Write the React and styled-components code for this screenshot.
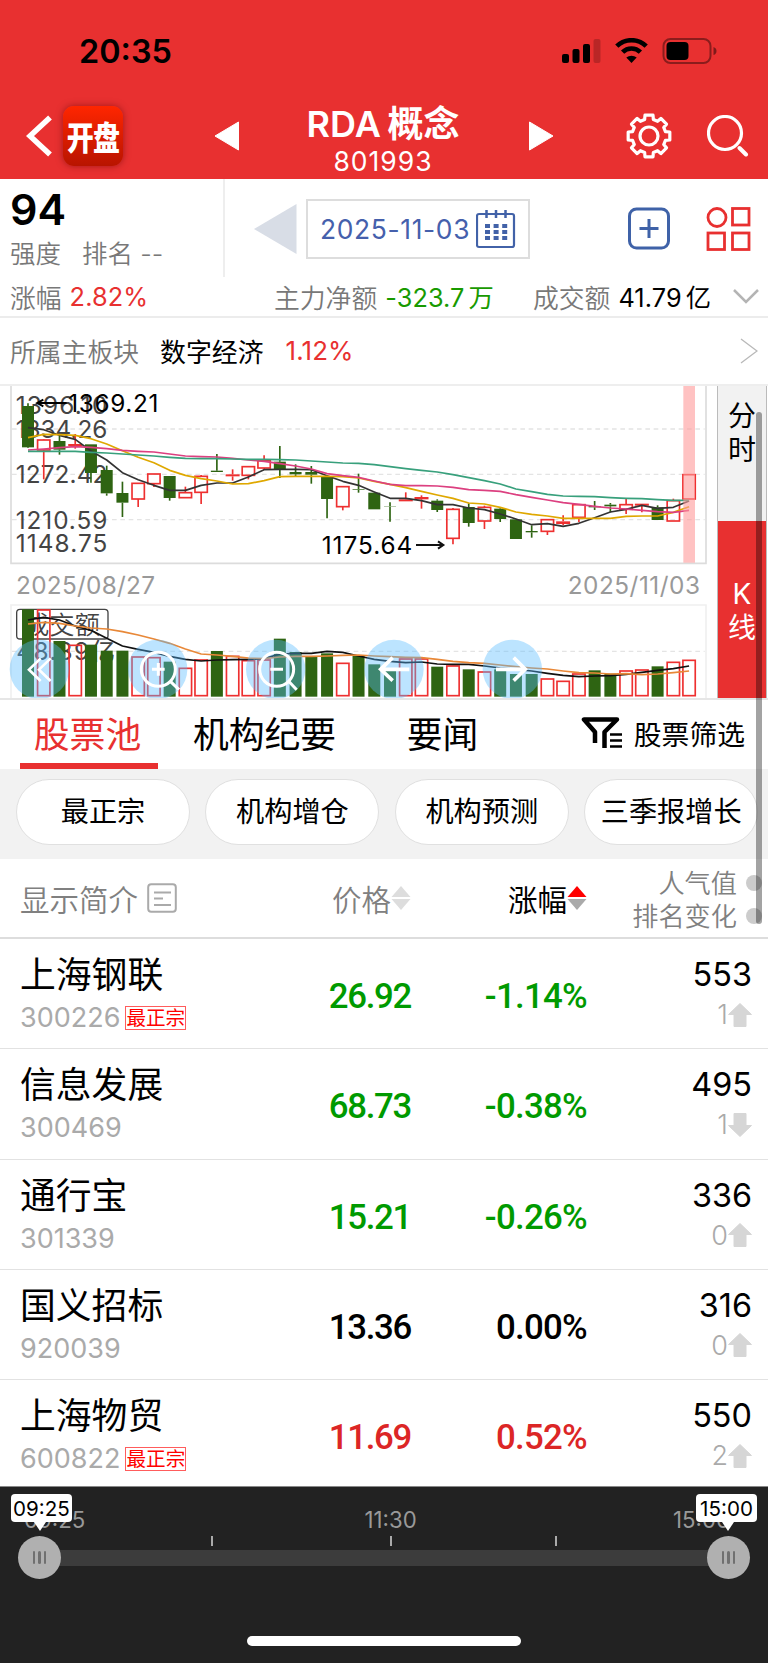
import React from "react";
import styled, { createGlobalStyle } from "styled-components";

const Global = createGlobalStyle`
  * { box-sizing: border-box; }
  body { margin: 0; background: #fff; }
`;

const RED = "#e83030";
const GREEN = "#009a00";

const Screen = styled.div`
  position: relative;
  width: 768px;
  height: 1663px;
  overflow: hidden;
  display: flex;
  flex-direction: column;
  background: #fff;
  color: #000;
  font-family: "Inter", "Noto Sans CJK SC", sans-serif;
  white-space: nowrap;
`;

const Header = styled.header`
  height: 179px;
  flex: none;
  background: ${RED};
  color: #fff;
`;

const StatusBar = styled.div`
  height: 100px;
  display: flex;
  align-items: center;
  justify-content: space-between;
  padding: 3px 50px 0 79px;
  color: #000;
`;

const Clock = styled.div`
  font-size: 32.4px;
  font-weight: 600;
  letter-spacing: 0;
`;

const NavBar = styled.div`
  display: grid;
  grid-template-columns: 36px 60px 185px 152px 167px 81px 42px;
  grid-template-rows: 72px;
  height: 72px;
  align-items: center;
  padding-left: 26px;
`;

const NavArrow = styled.svg`
  width: 26px;
  height: 30px;
  margin-left: ${(p) => p.$inset}px;
`;

const AppLogo = styled.div`
  width: 60px;
  height: 60px;
  margin-left: 1px;
  border-radius: 11px;
  background: linear-gradient(#ff2600, #b81400);
  box-shadow: 0 0 7px rgba(90, 0, 0, 0.5);
  display: flex;
  align-items: center;
  justify-content: center;
  font-size: 27px;
  font-weight: 900;
  letter-spacing: -0.8px;
`;

const LogoText = styled.span`
  transform: scaleY(1.2);
`;

const TitleBlock = styled.div`
  display: flex;
  flex-direction: column;
  align-items: center;
  padding-top: 10px;
`;

const Title = styled.div`
  font-size: 36px;
  line-height: 41px;
  font-weight: 600;
  word-spacing: -2.5px;
`;

const SubTitle = styled.div`
  font-size: 26.5px;
  line-height: 33px;
  letter-spacing: 1px;
`;

const Summary = styled.section`
  height: 98px;
  flex: none;
  display: flex;
`;

const Strength = styled.div`
  width: 225px;
  border-right: 2px solid #eee;
  padding: 4px 0 0 10px;
`;

const Score = styled.div`
  font-size: 43px;
  line-height: 52px;
  font-weight: 600;
`;

const Caption = styled.div`
  display: flex;
  gap: ${(p) => p.$gap || 0}px;
  font-size: 25.5px;
  line-height: 38px;
  color: #787878;
  font-weight: 350;
`;

const DatePanel = styled.div`
  flex: 1;
  display: flex;
  align-items: center;
  padding: 1px 0 0 29px;
`;

const DateBox = styled.div`
  width: 224px;
  height: 60px;
  margin: 0 98px 0 9px;
  border: 2px solid #ddd;
  display: flex;
  align-items: center;
  justify-content: space-between;
  padding: 0 12px 0 12px;
  font-size: 26.4px;
  letter-spacing: 0.65px;
  color: #4560ac;
`;

const StatsRow = styled.div`
  height: 41px;
  flex: none;
  display: grid;
  grid-template-columns: 264px 259px 200px 1fr;
  align-items: center;
  padding: 0 0 1px 10px;
  border-bottom: 2px solid #ececec;
`;

const Stat = styled.div`
  display: flex;
  align-items: center;
  gap: 8px;
  font-size: 25.3px;
`;

const Label = styled.span`
  color: #787878;
  font-weight: 350;
  font-size: 25.8px;
`;

const Value = styled.span`
  color: ${(p) => p.$color || "#000"};
  letter-spacing: 0.1px;
`;

const Unit = styled.span`
  margin-left: 4px;
`;

const SectorRow = styled.div`
  height: 68px;
  flex: none;
  display: flex;
  align-items: center;
  padding: 0 10px 2px 10px;
  font-size: 25.9px;
  border-bottom: 2px solid #eee;
`;

const SectorName = styled.span`
  margin: 0 22px 0 21px;
`;

const MoreIcon = styled.svg`
  width: 18px;
  height: 26px;
  margin: 2px 0 0 auto;
`;

const ChartArea = styled.section`
  height: 314px;
  flex: none;
  display: flex;
  border-bottom: 2px solid #e6e6e6;
`;

const ModeTabs = styled.div`
  width: 50px;
  margin-left: 1px;
  display: flex;
  flex-direction: column;
  border-left: 1px solid #bbb;
  border-right: 1px solid #bbb;
`;

const ModeTab = styled.div`
  height: ${(p) => p.$height}px;
  display: flex;
  flex-direction: column;
  align-items: center;
  padding-top: ${(p) => p.$top}px;
  background: ${(p) => (p.$active ? RED : "#f2f2f2")};
  color: ${(p) => (p.$active ? "#fff" : "#000")};
  font-size: 28px;
  line-height: 34px;
`;

const TabBar = styled.nav`
  height: 69px;
  flex: none;
  display: flex;
  padding: 0 23px 0 20px;
`;

const Tab = styled.div`
  width: ${(p) => p.$width}px;
  margin-right: ${(p) => p.$after}px;
  text-indent: ${(p) => (p.$active ? -3 : -1)}px;
  text-align: center;
  font-size: 35.8px;
  line-height: 70px;
  height: 69px;
  color: ${(p) => (p.$active ? RED : "#000")};
  border-bottom: 6px solid ${(p) => (p.$active ? RED : "transparent")};
`;

const FilterButton = styled.div`
  margin-left: auto;
  height: 66px;
  display: flex;
  align-items: center;
  gap: 11px;
  font-size: 27.8px;
`;

const Chips = styled.div`
  height: 90px;
  flex: none;
  background: #f2f2f2;
  display: flex;
  gap: 15.4px;
  padding: 10px 0 0 16px;
`;

const Chip = styled.div`
  width: 174px;
  height: 66px;
  flex: none;
  border: 1.5px solid #e0e0e0;
  border-radius: 33px;
  background: #fff;
  display: flex;
  align-items: center;
  justify-content: center;
  padding-bottom: 6px;
  font-size: 28.2px;
`;

const columns = "290px 101px 176px 165px";

const TableHead = styled.div`
  height: 80px;
  flex: none;
  display: grid;
  grid-template-columns: ${columns};
  align-items: center;
  padding: 0 16px 0 20px;
  border-bottom: 2px solid #ddd;
  color: #808080;
  font-size: 29.5px;
`;

const HeadCell = styled.div`
  display: flex;
  align-items: center;
  justify-content: ${(p) => (p.$end ? "flex-end" : "flex-start")};
  gap: ${(p) => p.$gap || 0}px;
  color: ${(p) => (p.$on ? "#000" : "inherit")};
  font-weight: ${(p) => (p.$on ? 400 : 350)};
`;

const RankHead = styled.div`
  display: flex;
  flex-direction: column;
  align-items: flex-end;
  padding-top: 3px;
  font-size: 26.2px;
  font-weight: 350;
  line-height: 33px;
`;

const RankLine = styled.div`
  display: flex;
  align-items: center;
  gap: 9px;
  margin-right: -10px;
`;

const Dot = styled.i`
  width: 16px;
  height: 16px;
  border-radius: 50%;
  background: #ccc;
`;

const StockRow = styled.div`
  height: 110.3px;
  flex: none;
  display: grid;
  grid-template-columns: ${columns};
  padding: 0 16px 0 20px;
  border-bottom: 1px solid #e2e2e2;
`;

const StockName = styled.div`
  font-size: 35.8px;
  line-height: 44px;
  padding-top: 14px;
`;

const CodeLine = styled.div`
  display: flex;
  align-items: center;
  gap: 5px;
  height: 41px;
  font-size: 27px;
  color: #aaa;
`;

const Tag = styled.span`
  height: 24px;
  border: 1px solid #ff5c5c;
  color: #f00;
  font-size: 19.6px;
  line-height: 22px;
`;

const Quote = styled.div`
  padding-top: 1px;
  line-height: 113px;
  font-family: Roboto, sans-serif;
  font-size: 34.8px;
  font-weight: 500;
  letter-spacing: ${(p) => p.$track}px;
  text-align: right;
  color: ${(p) => p.$color};
`;

const Rank = styled.div`
  display: flex;
  flex-direction: column;
  align-items: flex-end;
  padding-top: 15px;
`;

const RankValue = styled.div`
  font-size: 32.4px;
  line-height: 42px;
`;

const RankMove = styled.div`
  display: flex;
  align-items: center;
  height: 37px;
  font-size: 27px;
  color: #aaa;
  font-weight: 300;
`;

const Timeline = styled.footer`
  position: absolute;
  left: 0;
  right: 0;
  top: 1486px;
  height: 177px;
  background: #222;
  border-top: 1px solid #888;
`;

const TimeLabels = styled.div`
  display: flex;
  padding: 19px 38px 0 24px;
  height: 49px;
  font-size: 22.2px;
  line-height: 27px;
  color: #999;
`;

const MidLabel = styled.span`
  flex: 1;
  padding-left: 23px;
  text-align: center;
`;

const Ticks = styled.div`
  display: flex;
  height: 14px;
  padding-left: 211px;
`;

const Tick = styled.i`
  width: 2px;
  height: 10px;
  margin-right: ${(p) => p.$after}px;
  background: #aaa;
`;

const Track = styled.div`
  height: 16px;
  margin: 0 39px;
  background: #3c3c3c;
`;

const Handle = styled.div`
  position: absolute;
  top: 49px;
  left: ${(p) => p.$x}px;
  width: 43px;
  height: 43px;
  border-radius: 50%;
  background: #b0b0b0;
  display: flex;
  align-items: center;
  justify-content: center;
  gap: 3px;
`;

const Grip = styled.i`
  width: 2.5px;
  height: 13px;
  border-radius: 2px;
  background: #707070;
`;

const Bubble = styled.div`
  position: absolute;
  top: 7px;
  left: ${(p) => p.$x}px;
  width: 61px;
  height: 28px;
  border-radius: 4px;
  background: #fff;
  color: #000;
  text-align: center;
  font-size: 20.6px;
  line-height: 29px;
  &::after {
    content: "";
    position: absolute;
    top: 28px;
    left: ${(p) => p.$tip}px;
    border: 6px solid transparent;
    border-top: 9px solid #fff;
    border-bottom: 0;
  }
`;

const HomeBar = styled.div`
  width: 274px;
  height: 10px;
  margin: 70px auto 0;
  border-radius: 5px;
  background: #fff;
`;

const ScrollThumb = styled.div`
  position: absolute;
  left: 756px;
  top: 412px;
  width: 6px;
  height: 512px;
  border-radius: 3px;
  background: rgba(0, 0, 0, 0.36);
`;

const PITCH = 47.22;
const cx = (i) => 84 + PITCH * i;

// Each entry: direction, body top, body bottom, high, low, volume top.
const candles = [
  ["g", 78, 202, 70, 204, 688], ["r", 180, 210, 178, 298, 688], ["g", 183, 209, 166, 224, 783],
  ["r", 192, 198, 162, 206, 794], ["g", 193, 279, 193, 308, 794], ["g", 270, 340, 257, 347, 812],
  ["g", 339, 368, 305, 411, 812], ["r", 310, 357, 310, 381, 829], ["r", 282, 311, 282, 321, 831],
  ["g", 288, 354, 288, 362, 845], ["r", 338, 353, 320, 353, 863], ["r", 289, 337, 285, 372, 838],
  ["g", 272, 276, 222, 276, 813], ["r", 283, 289, 268, 302, 827], ["r", 260, 286, 260, 298, 840],
  ["r", 242, 264, 226, 270, 838], ["g", 245, 270, 198, 294, 776], ["g", 276, 283, 253, 288, 816],
  ["g", 276, 284, 258, 311, 830], ["g", 290, 357, 290, 415, 820], ["r", 320, 380, 318, 391, 848],
  ["g", 327, 329, 281, 338, 828], ["g", 338, 388, 338, 388, 853], ["g", 379, 380, 367, 425, 872],
  ["r", 358, 364, 337, 364, 835], ["r", 351, 358, 346, 386, 835], ["g", 362, 390, 358, 396, 860],
  ["r", 388, 475, 384, 493, 856], ["g", 381, 429, 370, 440, 868], ["r", 382, 423, 377, 447, 874],
  ["g", 386, 417, 383, 426, 868], ["g", 418, 477, 418, 477, 882], ["g", 453, 457, 436, 473, 882],
  ["r", 419, 454, 419, 465, 895], ["r", 424, 432, 406, 436, 902], ["r", 374, 412, 372, 427, 880],
  ["g", 378, 382, 363, 390, 871], ["g", 374, 379, 369, 397, 881], ["r", 374, 388, 357, 402, 871],
  ["r", 371, 377, 371, 397, 868], ["g", 382, 420, 376, 420, 859], ["r", 362, 423, 356, 423, 845],
  ["r", 284, 357, 284, 357, 839],
];

const priceLines = [
  ["#333", [143, 149, 166, 178, 213, 240, 278, 299, 316, 331, 331, 316, 309, 309, 291, 269, 268, 268, 269, 287, 304, 316, 336, 355, 355, 362, 374, 374, 384, 389, 402, 417, 434, 431, 439, 430, 413, 396, 388, 376, 385, 382, 363]],
  ["#dfa800", [173, 163, 164, 166, 176, 192, 212, 232, 248, 271, 286, 296, 303, 312, 311, 302, 290, 289, 289, 289, 290, 294, 304, 313, 323, 334, 345, 355, 369, 372, 382, 396, 403, 408, 415, 415, 415, 415, 409, 408, 408, 397, 380]],
  ["#dc4080", [210, 207, 203, 200, 202, 206, 211, 214, 216, 222, 228, 230, 231, 235, 240, 244, 251, 258, 267, 281, 287, 292, 303, 313, 317, 317, 318, 322, 329, 331, 334, 344, 352, 360, 368, 373, 379, 384, 387, 391, 395, 397, 391]],
  ["#38a07c", [214, 214, 214, 214, 217, 219, 222, 225, 228, 232, 235, 236, 236, 237, 238, 238, 239, 240, 243, 246, 249, 250, 254, 260, 266, 271, 276, 284, 293, 302, 312, 327, 335, 343, 348, 349, 350, 353, 355, 356, 359, 361, 361]],
];

const volumeLines = [
  ["#111", [720, 712, 720, 738, 751, 775, 798, 808, 817, 829, 838, 843, 840, 839, 838, 836, 822, 820, 820, 814, 817, 828, 838, 844, 848, 846, 852, 853, 853, 858, 864, 868, 873, 880, 886, 890, 888, 887, 883, 877, 871, 866, 858]],
  ["#e88838", [732, 727, 730, 738, 744, 747, 755, 765, 777, 790, 807, 822, 825, 829, 834, 836, 831, 829, 829, 828, 826, 825, 828, 830, 832, 833, 838, 844, 848, 850, 855, 860, 864, 867, 873, 878, 879, 882, 881, 884, 882, 878, 873]],
];

const axis = [["1396.10", 100], ["1334.26", 172], ["1272.42", 307], ["1210.59", 445], ["1148.75", 516]];
const UP = "#ee3030";
const DOWN = "#2e6412";

const Polyline = ({ color, ys }) => (
  <polyline fill="none" stroke={color} strokeWidth="5" strokeLinejoin="round"
    points={ys.map((y, i) => `${cx(i)},${y}`).join(" ")} />
);

const Candle = ({ i, d: [dir, top, bottom, high, low, vol] }) => {
  const x = cx(i);
  const color = dir === "r" ? UP : DOWN;
  const hollow = dir === "r" && bottom - top > 9;
  return (
    <g>
      {high < top && <path d={`M${x} ${high}V${top}`} stroke={color} strokeWidth="5" />}
      {low > bottom && <path d={`M${x} ${bottom}V${low}`} stroke={color} strokeWidth="5" />}
      {hollow
        ? <rect x={x - 18.5} y={top} width="37" height={bottom - top} fill="none" stroke={UP} strokeWidth="5" />
        : <rect x={dir === "r" ? x - 21 : x - 18} y={top} width={dir === "r" ? 42 : 36} height={bottom - top} fill={color} />}
      {dir === "r"
        ? <rect x={x - 18.5} y={vol + 2} width="37" height={945 - vol} fill="none" stroke={UP} strokeWidth="5" />
        : <rect x={x - 18} y={vol} width="36" height={950 - vol} fill={DOWN} />}
    </g>
  );
};

const KChart = () => (
  <svg width="716" height="312" viewBox="0 18 2148 936" fontFamily="Inter, 'Noto Sans CJK SC', sans-serif" fontSize="73">
    <path d="M33 18V550H2118V18" fill="none" stroke="#dcdcdc" strokeWidth="5" />
    <path d="M33 954V675H2118V954" fill="none" stroke="#f0f0f0" strokeWidth="5" />
    <path d="M36 147H2114M36 283H2114M36 419H2114M36 814H2114" stroke="#e4e4e4" strokeWidth="4" strokeDasharray="14 11" />
    {axis.map(([t, y]) => (
      <text key={t} x="47" y={y + 1} fill="#444" textLength="275">{t}</text>
    ))}
    <rect x="50" y="688" width="274" height="89" rx="10" fill="none" stroke="#444" strokeWidth="4" />
    <text x="72" y="761" fill="#444" textLength="228" fontWeight="350" fontSize="76">成交额</text>
    <text x="49" y="840" fill="#444" textLength="296">48.89亿</text>
    <text x="48" y="641" fill="#999" textLength="417">2025/08/27</text>
    <text x="1703" y="641" fill="#999" textLength="397">2025/11/03</text>
    {candles.map((d, i) => <Candle key={i} i={i} d={d} />)}
    {[...priceLines, ...volumeLines].map(([c, ys]) => <Polyline key={c} color={c} ys={ys} />)}
    <text x="205" y="97" fill="#000" textLength="270">1369.21</text>
    <path d="M200 69H112M130 59L112 69L130 79" fill="none" stroke="#000" strokeWidth="6" />
    <text x="965" y="521" fill="#000" textLength="272">1175.64</text>
    <path d="M1248 495H1330M1314 484L1330 495L1314 506" fill="none" stroke="#111" strokeWidth="6" />
    <rect x="2050" y="18" width="35" height="530" fill="#ff9a9a" fillOpacity="0.6" />
    {[118, 473, 827, 1182, 1537].map((x) => (
      <circle key={x} cx={x} cy="868" r="89" fill="#58bbff" fillOpacity="0.4" />
    ))}
    <g fill="none" stroke="#fff" strokeWidth="9">
      <path d="M122 835L87 869L122 903M152 835L117 869L152 903" strokeWidth="8" />
      <circle cx="475" cy="868" r="51" />
      <path d="M511 904L537 929M475 849V887M456 868H494" />
      <circle cx="830" cy="868" r="51" />
      <path d="M866 904L890 929M811 868H849" />
      <path d="M1228 868H1142M1178 833L1142 868L1178 902" strokeWidth="11" />
      <path d="M1488 868H1576M1541 833L1576 868L1541 902" strokeWidth="11" />
    </g>
  </svg>
);

const Sorter = ({ up, down }) => (
  <svg width="20" height="26" viewBox="0 0 20 26">
    <path d="M0.500 12L10 1L19.500 12Z" fill={up} />
    <path d="M0.500 14H19.500L10 25Z" fill={down} />
  </svg>
);

const MoveArrow = ({ down }) => (
  <svg width="24" height="24" viewBox="0 0 24 24">
    <path d="M12 0.500L23.500 11.500H18V23.500H6V11.500H0.500Z" fill="#d6d6d6" stroke="#d6d6d6" strokeLinejoin="round"
      transform={down ? "rotate(180 12 12)" : undefined} />
  </svg>
);

const gearPath = (() => {
  const pts = [];
  for (let k = 0; k < 8; k++) {
    const a = (k * Math.PI) / 4 - Math.PI / 2;
    [[-0.26, 17], [-0.19, 21.2], [0.19, 21.2], [0.26, 17]].forEach(([o, r]) =>
      pts.push(`${(23 + r * Math.cos(a + o)).toFixed(2)} ${(23 + r * Math.sin(a + o)).toFixed(2)}`)
    );
  }
  return `M${pts.join("L")}Z`;
})();

const StatusIcons = () => (
  <svg width="156" height="28" viewBox="0 0 156 28">
    <rect x="0" y="16" width="7" height="9" rx="2" />
    <rect x="10.5" y="11" width="7" height="14" rx="2" />
    <rect x="21" y="6" width="7" height="19" rx="2" />
    <rect x="31.5" y="1" width="7" height="24" rx="2" opacity="0.2" />
    <g fill="none" stroke="#000" strokeWidth="4.6">
      <path d="M54.8 8.2A21 21 0 0 1 84.2 8.2" />
      <path d="M60.6 14.2A12.6 12.6 0 0 1 78.4 14.2" />
    </g>
    <path d="M64.3 19.6A8 8 0 0 1 74.7 19.6L69.5 25Z" />
    <rect x="101.5" y="1" width="47" height="24" rx="7" fill="none" stroke="#000" strokeOpacity="0.4" strokeWidth="2" />
    <rect x="104.5" y="4" width="22" height="18" rx="4" />
    <path d="M151.5 9Q154.500 10 154.500 13Q154.500 16 151.500 17Z" opacity="0.45" />
  </svg>
);

const stocks = [
  { name: "上海钢联", code: "300226", tag: true, price: "26.92", pct: "-1.14%", color: GREEN, rank: 553, move: 1 },
  { name: "信息发展", code: "300469", price: "68.73", pct: "-0.38%", color: GREEN, rank: 495, move: 1, down: true },
  { name: "通行宝", code: "301339", price: "15.21", pct: "-0.26%", color: GREEN, rank: 336, move: 0 },
  { name: "国义招标", code: "920039", price: "13.36", pct: "0.00%", color: "#000", rank: 316, move: 0 },
  { name: "上海物贸", code: "600822", tag: true, price: "11.69", pct: "0.52%", color: "#dc2626", rank: 550, move: 2 },
];

export default function App() {
  return (
    <Screen>
      <Global />
      <Header>
        <StatusBar>
          <Clock>20:35</Clock>
          <StatusIcons />
        </StatusBar>
        <NavBar>
          <svg width="27" height="42" viewBox="0 0 27 42">
            <path d="M24 2.500L4 21L24 39.500" fill="none" stroke="#fff" strokeWidth="5.500" />
          </svg>
          <AppLogo><LogoText>开盘</LogoText></AppLogo>
          <NavArrow $inset={92} viewBox="0 0 26 30">
            <path d="M24.500 1V29L1 15Z" fill="#fff" stroke="#fff" strokeLinejoin="round" />
          </NavArrow>
          <TitleBlock>
            <Title>RDA 概念</Title>
            <SubTitle>801993</SubTitle>
          </TitleBlock>
          <NavArrow $inset={69} viewBox="0 0 26 30">
            <path d="M1.500 1V29L25 15Z" fill="#fff" stroke="#fff" strokeLinejoin="round" />
          </NavArrow>
          <svg width="46" height="46" viewBox="0 0 46 46">
            <path d={gearPath} fill="none" stroke="#fff" strokeWidth="3.200" strokeLinejoin="round" />
            <circle cx="23" cy="23" r="9" fill="none" stroke="#fff" strokeWidth="3.200" />
          </svg>
          <svg width="42" height="42" viewBox="0 0 42 42">
            <circle cx="18" cy="18" r="16.500" fill="none" stroke="#fff" strokeWidth="3.200" />
            <path d="M32.500 33L39 39.500" stroke="#fff" strokeWidth="4" strokeLinecap="round" />
          </svg>
        </NavBar>
      </Header>

      <Summary>
        <Strength>
          <Score>94</Score>
          <Caption $gap={21}>
            <span>强度</span>
            <span>排名 --</span>
          </Caption>
        </Strength>
        <DatePanel>
          <svg width="43" height="50" viewBox="0 0 43 50">
            <path d="M42.500 0V50L0 25Z" fill="#d8dde6" />
          </svg>
          <DateBox>
            2025-11-03
            <svg width="40" height="40" viewBox="0 0 40 40" fill="none" stroke="#4262a8" strokeWidth="2.200">
              <rect x="1" y="5" width="37" height="33" rx="2" />
              <path d="M10.500 1V9M20 1V9M29.500 1V9" strokeWidth="2.500" />
              <path d="M9 17H31.500M9 23H31.500M9 29H31.500" strokeWidth="4" strokeDasharray="5 3.600" />
            </svg>
          </DateBox>
          <svg width="124" height="44" viewBox="0 0 124 44" fill="none">
            <rect x="1.500" y="2" width="39" height="39" rx="7" stroke="#3f62a8" strokeWidth="3" />
            <path d="M21 12V31M11.500 21.500H30.500" stroke="#3f62a8" strokeWidth="3" />
            <g stroke={RED} strokeWidth="2.800">
              <circle cx="89" cy="10.500" r="9" />
              <rect x="104.500" y="1.500" width="16.500" height="16.500" />
              <rect x="80" y="26" width="16.500" height="16.500" />
              <rect x="104.500" y="26" width="16.500" height="16.500" />
            </g>
          </svg>
        </DatePanel>
      </Summary>

      <StatsRow>
        <Stat><Label>涨幅</Label><Value $color={RED}>2.82%</Value></Stat>
        <Stat><Label>主力净额</Label><Value $color="#189a00">-323.7<Unit>万</Unit></Value></Stat>
        <Stat><Label>成交额</Label><Value>41.79<Unit>亿</Unit></Value></Stat>
        <svg width="26" height="16" viewBox="0 0 26 16">
          <path d="M1 2L13 14L25 2" fill="none" stroke="#b4b4b4" strokeWidth="2.500" />
        </svg>
      </StatsRow>

      <SectorRow>
        <Label>所属主板块</Label>
        <SectorName>数字经济</SectorName>
        <Value $color={RED}>1.12%</Value>
        <MoreIcon viewBox="0 0 18 26">
          <path d="M1 1L17 13L1 25" fill="none" stroke="#b8b8b8" strokeWidth="1.300" />
        </MoreIcon>
      </SectorRow>

      <ChartArea>
        <KChart />
        <ModeTabs>
          <ModeTab $height={135} $top={13}><span>分</span><span>时</span></ModeTab>
          <ModeTab $active $height={177} $top={56}><span>K</span><span>线</span></ModeTab>
        </ModeTabs>
      </ChartArea>

      <TabBar>
        <Tab $active $width={138} $after={35}>股票池</Tab>
        <Tab $width={144} $after={70}>机构纪要</Tab>
        <Tab $width={72} $after={0}>要闻</Tab>
        <FilterButton>
          <svg width="42" height="33" viewBox="0 0 42 33" fill="none" stroke="#000">
            <path d="M14 26V15L3 2.500H36L23.500 15V31" strokeWidth="4.500" strokeLinejoin="round" />
            <path d="M29 17.500H41M29 23.500H41M29 29.500H41" strokeWidth="2.600" />
          </svg>
          股票筛选
        </FilterButton>
      </TabBar>

      <Chips>
        {["最正宗", "机构增仓", "机构预测", "三季报增长"].map((t) => <Chip key={t}>{t}</Chip>)}
      </Chips>

      <TableHead>
        <HeadCell $gap={9}>
          显示简介
          <svg width="30" height="30" viewBox="0 0 30 30" fill="none" stroke="#aaa">
            <rect x="1.200" y="1.200" width="27.600" height="27.600" rx="3" strokeWidth="2" />
            <path d="M7 9.500H24M7 15.500H16M7 22H24" strokeWidth="2" />
          </svg>
        </HeadCell>
        <HeadCell $end>价格<Sorter up="#ddd" down="#ddd" /></HeadCell>
        <HeadCell $end $on>涨幅<Sorter up="#f00" down="#aaa" /></HeadCell>
        <RankHead>
          <RankLine>人气值<Dot /></RankLine>
          <RankLine>排名变化<Dot /></RankLine>
        </RankHead>
      </TableHead>

      {stocks.map((s) => (
        <StockRow key={s.code}>
          <div>
            <StockName>{s.name}</StockName>
            <CodeLine>{s.code}{s.tag && <Tag>最正宗</Tag>}</CodeLine>
          </div>
          <Quote $color={s.color} $track={-1.3}>{s.price}</Quote>
          <Quote $color={s.color} $track={-0.7}>{s.pct}</Quote>
          <Rank>
            <RankValue>{s.rank}</RankValue>
            <RankMove>{s.move}<MoveArrow down={s.down} /></RankMove>
          </Rank>
        </StockRow>
      ))}

      <Timeline>
        <TimeLabels><span>09:25</span><MidLabel>11:30</MidLabel><span>15:00</span></TimeLabels>
        <Ticks><Tick $after={177} /><Tick $after={163} /><Tick $after={0} /></Ticks>
        <Track />
        <HomeBar />
        <Handle $x={18}><Grip /><Grip /><Grip /></Handle>
        <Handle $x={707}><Grip /><Grip /><Grip /></Handle>
        <Bubble $x={11} $tip={23}>09:25</Bubble>
        <Bubble $x={696} $tip={26}>15:00</Bubble>
      </Timeline>
      <ScrollThumb />
    </Screen>
  );
}
